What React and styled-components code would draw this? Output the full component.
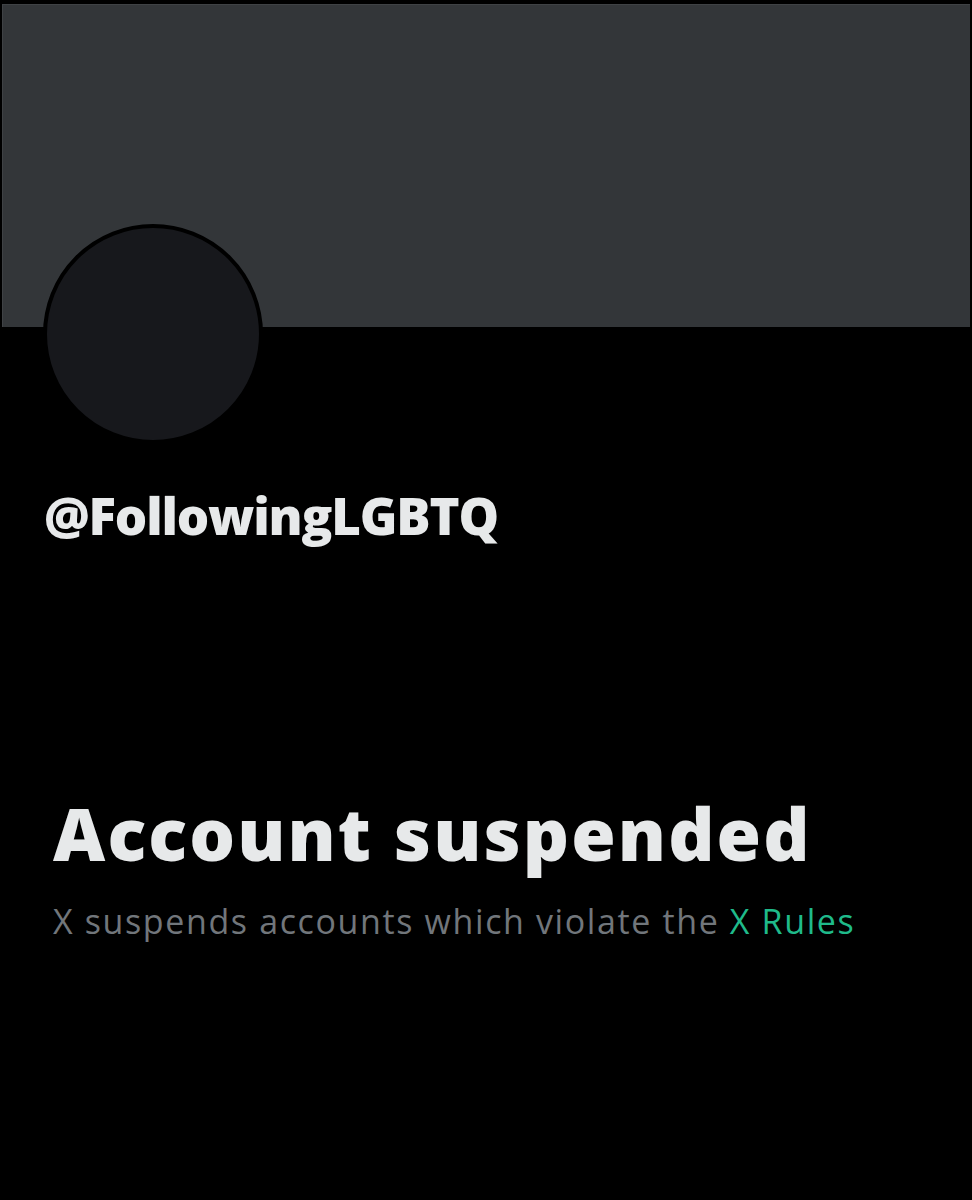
import React from "react";
import styled, { createGlobalStyle } from "styled-components";

const Global = createGlobalStyle`
  html, body { margin: 0; padding: 0; background: #000; }
  body { font-family: "Open Sans", "Liberation Sans", sans-serif; }
`;

const Page = styled.div`
  width: 972px;
  height: 1200px;
  background: #000;
  display: flex;
  flex-direction: column;
  padding-top: 4px;
  box-sizing: border-box;
`;

const Banner = styled.div`
  margin: 0 2px 0 2px;
  height: 323px;
  background: #333639;
  box-shadow: inset 1px 1px 0 #3f4245;
`;

const Avatar = styled.div`
  margin: -103px 0 0 43px;
  width: 220px;
  height: 220px;
  box-sizing: border-box;
  border-radius: 50%;
  border: 4px solid #000;
  background: #17181c;
`;

const Handle = styled.div`
  margin: 41px 0 0 44px;
  font-family: "Open Sans", sans-serif;
  font-weight: 800;
  font-size: 51px;
  line-height: 60px;
  letter-spacing: -1.2px;
  color: #e7e9ea;
`;

const Notice = styled.section`
  margin: 246px 0 0 53px;
  display: flex;
  flex-direction: column;
`;

const Title = styled.h1`
  margin: 0;
  font-family: "Open Sans", sans-serif;
  font-weight: 800;
  font-size: 72px;
  line-height: 84px;
  letter-spacing: 2.1px;
  color: #e7e9ea;
`;

const Sub = styled.p`
  margin: 24px 0 0;
  font-family: "Open Sans", sans-serif;
  font-weight: 400;
  font-size: 34px;
  line-height: 44px;
  letter-spacing: 1.62px;
  color: #71767b;
`;

const Link = styled.span`
  color: #1fba8a;
`;

export default function App() {
  return (
    <Page>
      <Global />
      <Banner />
      <Avatar />
      <Handle>@FollowingLGBTQ</Handle>
      <Notice>
        <Title>Account suspended</Title>
        <Sub>
          X suspends accounts which violate the <Link>X Rules</Link>
        </Sub>
      </Notice>
    </Page>
  );
}
